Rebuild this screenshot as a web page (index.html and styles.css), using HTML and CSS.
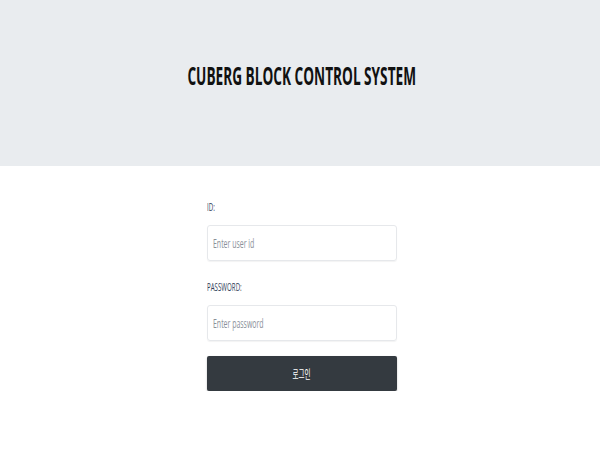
FILE: index.html
```html
<!DOCTYPE html>
<html lang="ko">
<head>
<meta charset="utf-8">
<title>CUBERG BLOCK CONTROL SYSTEM</title>
<link rel="stylesheet" href="styles.css">
</head>
<body>
<header class="hero">
  <h1 class="title"><span class="squeeze">CUBERG BLOCK CONTROL SYSTEM</span></h1>
</header>
<main class="content">
  <form class="login">
    <label class="label" for="uid"><span class="squeeze-left">ID:</span></label>
    <div class="field"><span class="placeholder squeeze-left">Enter user id</span></div>
    <label class="label" for="pw"><span class="squeeze-left">PASSWORD:</span></label>
    <div class="field"><span class="placeholder squeeze-left">Enter password</span></div>
    <button type="button" class="btn"><span class="squeeze">로그인</span></button>
  </form>
</main>
</body>
</html>
```
FILE: styles.css
```css
html, body {
  margin: 0;
  padding: 0;
  background: #ffffff;
  font-family: "Open Sans", "Noto Sans CJK KR", sans-serif;
}
.hero {
  height: 166px;
  box-sizing: border-box;
  padding-top: 58px;
  padding-left: 4px;
  background: #e9ecef;
  display: flex;
  align-items: flex-start;
  justify-content: center;
}
.title {
  margin: 0;
  font-size: 25px;
  line-height: 34px;
  font-weight: 700;
  color: #111;
  white-space: nowrap;
}
.squeeze {
  display: inline-block;
  transform: scaleX(0.545);
  transform-origin: center;
}
.squeeze-left {
  display: inline-block;
  transform: scaleX(0.56);
  transform-origin: left center;
  white-space: nowrap;
}
.content {
  display: flex;
  justify-content: center;
  padding-top: 34px;
  padding-left: 4px;
}
.login {
  width: 190px;
  display: flex;
  flex-direction: column;
}
.label {
  font-size: 11px;
  line-height: 14px;
  color: #2f3d57;
  margin-bottom: 11px;
}
.field {
  height: 36px;
  box-sizing: border-box;
  border: 1px solid #e6e8eb;
  border-radius: 3px;
  box-shadow: 0 1px 1px rgba(0,0,0,0.05);
  display: flex;
  align-items: center;
  padding-left: 5px;
  margin-bottom: 19px;
}
.field .placeholder {
  font-size: 12px;
  color: #8a9099;
  transform: scaleX(0.58);
}
.btn {
  margin-top: -4px;
  height: 35px;
  padding: 0;
  background: #343a40;
  border: none;
  border-radius: 2px;
  color: #fff;
  font-size: 12px;
  font-family: "Noto Sans CJK KR", sans-serif;
  box-shadow: 0 1px 2px rgba(0,0,0,0.25);
}
```
